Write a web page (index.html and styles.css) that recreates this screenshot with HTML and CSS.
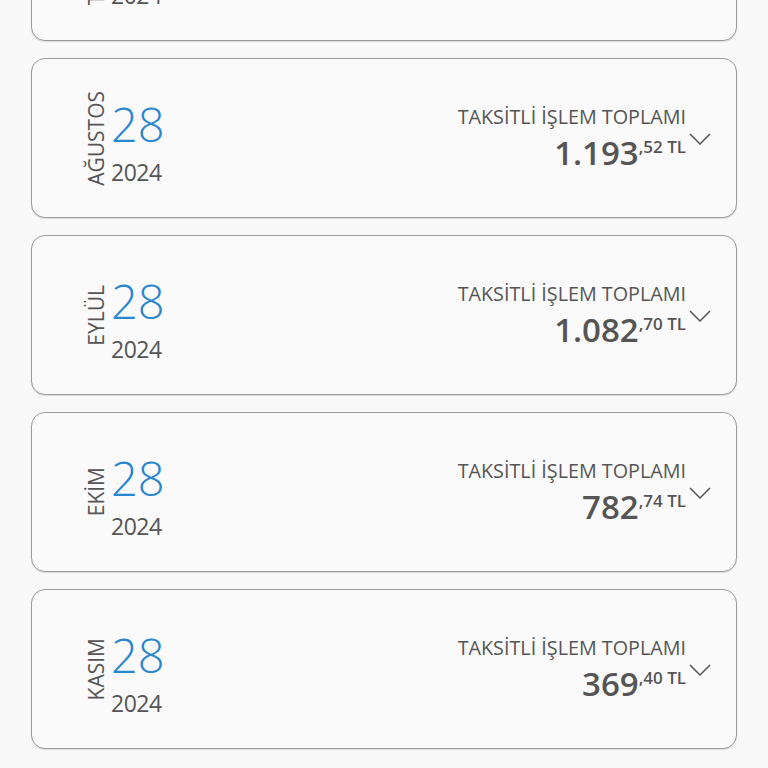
FILE: index.html
```html
<!DOCTYPE html>
<html lang="tr">
<head>
    <meta charset="UTF-8">
    <meta name="viewport" content="width=device-width, initial-scale=1.0">
    <title>Taksitli İşlemler</title>
    <link rel="stylesheet" href="styles.css">
</head>
<body>
    <div class="list">
        <div class="card">
            <div class="date">
                <div class="month">TEMMUZ</div>
                <div class="day-year">
                    <div class="day">28</div>
                    <div class="year">2024</div>
                </div>
            </div>
            <div class="total">
                <div class="label">TAKSİTLİ İŞLEM TOPLAMI</div>
                <div class="amount"><span class="int">1.193</span><span class="dec">,52 TL</span></div>
            </div>
            <svg class="chevron" viewBox="0 0 22 12"><polyline points="1,1 11,11 21,1"/></svg>
        </div>

        <div class="card">
            <div class="date">
                <div class="month">AĞUSTOS</div>
                <div class="day-year">
                    <div class="day">28</div>
                    <div class="year">2024</div>
                </div>
            </div>
            <div class="total">
                <div class="label">TAKSİTLİ İŞLEM TOPLAMI</div>
                <div class="amount"><span class="int">1.193</span><span class="dec">,52 TL</span></div>
            </div>
            <svg class="chevron" viewBox="0 0 22 12"><polyline points="1,1 11,11 21,1"/></svg>
        </div>

        <div class="card">
            <div class="date">
                <div class="month">EYLÜL</div>
                <div class="day-year">
                    <div class="day">28</div>
                    <div class="year">2024</div>
                </div>
            </div>
            <div class="total">
                <div class="label">TAKSİTLİ İŞLEM TOPLAMI</div>
                <div class="amount"><span class="int">1.082</span><span class="dec">,70 TL</span></div>
            </div>
            <svg class="chevron" viewBox="0 0 22 12"><polyline points="1,1 11,11 21,1"/></svg>
        </div>

        <div class="card">
            <div class="date">
                <div class="month">EKİM</div>
                <div class="day-year">
                    <div class="day">28</div>
                    <div class="year">2024</div>
                </div>
            </div>
            <div class="total">
                <div class="label">TAKSİTLİ İŞLEM TOPLAMI</div>
                <div class="amount"><span class="int">782</span><span class="dec">,74 TL</span></div>
            </div>
            <svg class="chevron" viewBox="0 0 22 12"><polyline points="1,1 11,11 21,1"/></svg>
        </div>

        <div class="card">
            <div class="date">
                <div class="month">KASIM</div>
                <div class="day-year">
                    <div class="day">28</div>
                    <div class="year">2024</div>
                </div>
            </div>
            <div class="total">
                <div class="label">TAKSİTLİ İŞLEM TOPLAMI</div>
                <div class="amount"><span class="int">369</span><span class="dec">,40 TL</span></div>
            </div>
            <svg class="chevron" viewBox="0 0 22 12"><polyline points="1,1 11,11 21,1"/></svg>
        </div>
    </div>
</body>
</html>
```

FILE: styles.css
```css
/* Genel sayfa */
html, body {
    margin: 0;
    padding: 0;
    height: 100%;
    overflow: hidden;
    background: #f9f9f9;
    font-family: "Open Sans", "Noto Sans", sans-serif;
    color: #555;
}

/* Liste biraz kaydırılmış durumda */
.list {
    display: flex;
    flex-direction: column;
    gap: 17px;
    padding: 0 31px;
    margin-top: -119px;
}

.card {
    display: flex;
    height: 158px;
    padding: 0 25px 0 54px;
    border: 1px solid #9a9a9a;
    border-radius: 14px;
    background: #fafafa;
    box-shadow: 0 1px 1px rgba(0, 0, 0, 0.12);
}

/* Tarih kısmı */
.date {
    display: flex;
}

.month {
    align-self: center;
    writing-mode: vertical-rl;
    transform: rotate(180deg);
    font-size: 21px;
    line-height: 20px;
    color: #555;
}

.day-year {
    margin-left: 5px;
    padding-top: 40px;
}

.day {
    font-size: 47px;
    font-weight: 300;
    line-height: 50px;
    color: #2a86cf;
}

.year {
    margin-top: 8px;
    font-size: 23px;
    line-height: 30px;
    letter-spacing: -0.5px;
    color: #555;
}

/* Toplam kısmı */
.total {
    margin-left: auto;
    margin-top: 46px;
    text-align: right;
}

.label {
    font-size: 19.75px;
    line-height: 24px;
    color: #555;
}

.amount {
    margin-top: 6px;
    line-height: 36px;
    font-weight: 600;
    color: #555;
}

.amount .int {
    font-size: 33px;
}

.amount .dec {
    font-size: 17px;
    vertical-align: top;
    line-height: 24px;
}

.chevron {
    margin-top: 74px;
    margin-left: 3px;
    width: 22px;
    height: 12px;
    fill: none;
    stroke: #555;
    stroke-width: 1.5;
}
```
